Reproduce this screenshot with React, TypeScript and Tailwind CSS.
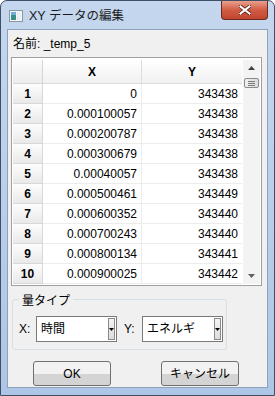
import React from "react";

const rows: [string, string][] = [
  ["0", "343438"],
  ["0.000100057", "343438"],
  ["0.000200787", "343438"],
  ["0.000300679", "343438"],
  ["0.00040057", "343438"],
  ["0.000500461", "343449"],
  ["0.000600352", "343440"],
  ["0.000700243", "343440"],
  ["0.000800134", "343441"],
  ["0.000900025", "343442"],
];

const font = "font-['Liberation_Sans','Noto_Sans_CJK_JP',sans-serif]";

function WinIcon() {
  return (
    <svg width="14" height="12" viewBox="0 0 14 12">
      <rect x="0.5" y="0.5" width="13" height="11" fill="#f4f6f8" stroke="#8a96a4" />
      <rect x="2" y="2" width="5" height="8" fill="#3b8f8a" />
      <rect x="2" y="2" width="5" height="3" fill="#6fb0d8" />
      <rect x="8" y="2" width="4" height="8" fill="#e8eef4" />
    </svg>
  );
}

function Combo(props: { value: string }) {
  return (
    <div className="flex h-[26px] w-[81px] items-center border border-[#7a7a7a] bg-white pl-[4px] pr-[1px]">
      <span className="flex-1 text-[12px] leading-[14px] text-black">{props.value}</span>
      <div className="flex h-[22px] w-[7px] items-center justify-center border border-[#8a8a8a] bg-gradient-to-b from-[#f4f4f4] to-[#dcdcdc]">
        <svg width="5" height="3" viewBox="0 0 5 3">
          <path d="M0 0H5L2.5 3Z" fill="#000" />
        </svg>
      </div>
    </div>
  );
}

function Button(props: { label: string }) {
  return (
    <button
      type="button"
      className="h-[25px] w-[78px] rounded-[3px] border border-[#707070] bg-gradient-to-b from-[#f2f2f2] from-50% to-[#d4d4d4] to-50% text-[12px] leading-[14px] text-black"
    >
      {props.label}
    </button>
  );
}

export default function App() {
  return (
    <div
      className={`${font} relative h-[396px] w-[275px] overflow-hidden rounded-t-[7px] border border-[#3f4e63] bg-gradient-to-b from-[#c4d7ee] to-[#aec6e6]`}
    >
      {/* title bar */}
      <div className="flex h-[28px] items-center pl-[8px]">
        <div className="mt-[2px]">
          <WinIcon />
        </div>
        <span className="ml-[6px] mt-[1px] text-[12.5px] leading-[14px] text-[#1a1a1a]">
          XY データの編集
        </span>
        <div className="ml-auto mr-[6px] -mt-[9px] flex h-[19px] w-[47px] items-center justify-center rounded-b-[4px] border border-t-0 border-[#6b2a20] bg-gradient-to-b from-[#e8a08e] via-[#d15b44] to-[#c2452e]">
          <svg width="12" height="10" viewBox="0 0 12 10">
            <path d="M1.5 1.5L10.5 8.5M10.5 1.5L1.5 8.5" stroke="#4a1a12" strokeWidth="3.6" strokeLinecap="square" />
            <path d="M1.5 1.5L10.5 8.5M10.5 1.5L1.5 8.5" stroke="#ffffff" strokeWidth="2.2" strokeLinecap="square" />
          </svg>
        </div>
      </div>

      {/* client area */}
      <div className="mx-[6px] h-[359px] border border-[#8fa2bd] bg-[#f0f0f0]">
        <div className="pl-[5px] pt-[7px] text-[12px] leading-[14px] text-black">名前: _temp_5</div>

        {/* table */}
        <div className="ml-[3px] mt-[6px] flex h-[229px] w-[251px] border border-[#a0a0a0] bg-white px-[1px] pb-[1px] pt-[2px]">
          <div className="w-[229px]">
            <div className="flex h-[24px] text-[12px] font-bold text-black">
              <div className="w-[30px] border-b border-r border-[#d5d5d5] bg-gradient-to-b from-[#fbfbfb] to-[#ececec]" />
              <div className="flex w-[99px] items-center justify-center border-b border-r border-[#dcdcdc] bg-gradient-to-b from-[#ffffff] to-[#f1f1f1]">
                X
              </div>
              <div className="flex w-[100px] items-center justify-center border-b border-[#dcdcdc] bg-gradient-to-b from-[#ffffff] to-[#f1f1f1]">
                Y
              </div>
            </div>
            {rows.map((r, i) => (
              <div key={i} className="flex h-[20px] text-[12px] text-black">
                <div className="flex w-[30px] items-center justify-center border-b border-r border-[#d8d8d8] bg-gradient-to-b from-[#fdfdfd] to-[#e9e9e9] font-bold">
                  {i + 1}
                </div>
                <div className="flex w-[99px] items-center justify-end border-b border-r border-[#ececec] pr-[4px]">
                  {r[0]}
                </div>
                <div className="flex w-[100px] items-center justify-end border-b border-[#ececec] pr-[4px]">
                  {r[1]}
                </div>
              </div>
            ))}
          </div>
          {/* scrollbar */}
          <div className="ml-[1px] flex w-[17px] flex-col items-center bg-[#f3f3f3]">
            <div className="flex h-[16px] w-full items-center justify-center">
              <svg width="7" height="4" viewBox="0 0 7 4">
                <path d="M0 4H7L3.5 0Z" fill="#404040" />
              </svg>
            </div>
            <div className="mt-[2px] flex h-[10px] w-[15px] flex-col items-center justify-center gap-[1px] rounded-[2px] border border-[#8b8b8b] bg-gradient-to-r from-[#f0f0f0] to-[#dcdcdc]">
              <div className="h-px w-[7px] bg-[#7a7a7a]" />
              <div className="h-px w-[7px] bg-[#7a7a7a]" />
              <div className="h-px w-[7px] bg-[#7a7a7a]" />
            </div>
            <div className="mt-auto flex h-[16px] w-full items-center justify-center">
              <svg width="7" height="4" viewBox="0 0 7 4">
                <path d="M0 0H7L3.5 4Z" fill="#606060" />
              </svg>
            </div>
          </div>
        </div>

        {/* group box */}
        <div className="relative ml-[4px] mt-[13px] h-[51px] w-[215px] rounded-[3px] border border-[#d5dfe5]">
          <span className="absolute -top-[6px] left-[6px] bg-[#f0f0f0] px-[3px] text-[12px] leading-[14px] text-black">
            量タイプ
          </span>
          <div className="flex items-center pl-[6px] pt-[16px]">
            <span className="w-[17px] text-[12px] leading-[14px] text-black">X:</span>
            <Combo value="時間" />
            <span className="ml-[7px] w-[18px] text-[12px] leading-[14px] text-black">Y:</span>
            <Combo value="エネルギ" />
          </div>
        </div>

        {/* buttons */}
        <div className="ml-[25px] mt-[11px] flex gap-[50px]">
          <Button label="OK" />
          <Button label="キャンセル" />
        </div>
      </div>
    </div>
  );
}
